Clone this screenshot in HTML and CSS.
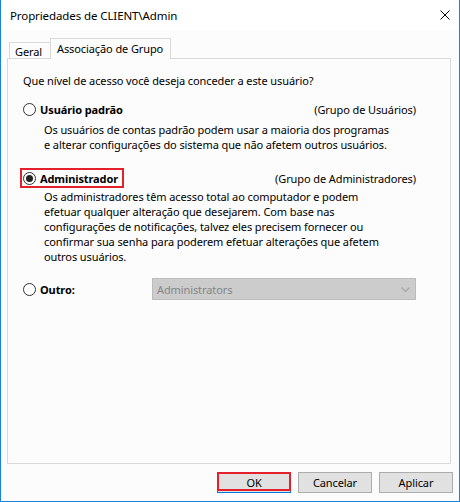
FILE: index.html
```html
<!DOCTYPE html>
<html lang="pt">
<head>
<meta charset="utf-8">
<title>Propriedades de CLIENT\Admin</title>
<link rel="stylesheet" href="styles.css">
</head>
<body>
<div class="window">
  <div class="titlebar">
    <span class="title">Propriedades de CLIENT\Admin</span>
    <svg class="close" width="10" height="10" viewBox="0 0 10 10"><path d="M0.5 0.5 L9.5 9.5 M9.5 0.5 L0.5 9.5" stroke="#000" stroke-width="1" fill="none"/></svg>
  </div>
  <div class="body">
    <div class="tabs">
      <div class="tab">Geral</div>
      <div class="tab active">Associação de Grupo</div>
    </div>
    <div class="panel">
      <p class="question">Que nível de acesso você deseja conceder a este usuário?</p>

      <div class="option first">
        <div class="opt-head">
          <span class="radio-label"><span class="radio"></span><b>Usuário padrão</b></span>
          <span class="group">(Grupo de Usuários)</span>
        </div>
        <p class="desc d1">Os usuários de contas padrão podem usar a maioria dos programas<br>e alterar configurações do sistema que não afetem outros usuários.</p>
      </div>

      <div class="option second">
        <div class="opt-head">
          <span class="radio-label marked"><span class="radio checked"><span class="dot"></span></span><b>Administrador</b></span>
          <span class="group">(Grupo de Administradores)</span>
        </div>
        <p class="desc d2">Os administradores têm acesso total ao computador e podem<br>efetuar qualquer alteração que desejarem. Com base nas<br>configurações de notificações, talvez eles precisem fornecer ou<br>confirmar sua senha para poderem efetuar alterações que afetem<br>outros usuários.</p>
      </div>

      <div class="option third">
        <div class="opt-head combo-row">
          <span class="radio-label"><span class="radio"></span><b>Outro:</b></span>
          <div class="combo">
            <span class="combo-text">Administrators</span>
            <svg class="chev" width="9" height="5" viewBox="0 0 9 5"><path d="M0.5 0.5 L4.5 4.5 L8.5 0.5" stroke="#a6a6a6" stroke-width="1.2" fill="none"/></svg>
          </div>
        </div>
      </div>
    </div>
    <div class="buttons">
      <button class="btn default">OK</button>
      <button class="btn">Cancelar</button>
      <button class="btn">Aplicar</button>
    </div>
  </div>
</div>
</body>
</html>
```
FILE: styles.css
```css
* { box-sizing: border-box; }
html, body { margin: 0; padding: 0; background: #fcfcfc; }
body {
  font-family: "Noto Sans", "Liberation Sans", sans-serif;
  font-size: 11px;
  letter-spacing: -0.1px;
  color: #000;
}
.window {
  width: 460px;
  height: 502px;
  border: 1px solid #1883d7;
  border-top: none;
  background: #fcfcfc;
  display: flex;
  flex-direction: column;
}
.titlebar {
  height: 30px;
  flex: none;
  background: #ffffff;
  display: flex;
  align-items: center;
  justify-content: space-between;
  padding: 0 9px 0 9px;
}
.title { line-height: 15px; font-size: 11.5px; }
.close { display: block; }
.body {
  flex: 1;
  display: flex;
  flex-direction: column;
  padding: 8px 6px 0 6px;
}
.tabs {
  display: flex;
  align-items: flex-end;
  height: 20px;
  margin-left: 2px;
  position: relative;
  z-index: 1;
}
.tab {
  line-height: 15px;
  white-space: nowrap;
}
.tab:not(.active) {
  width: 41px;
  height: 16px;
  border-left: 1px solid #d9d9d9;
  border-top: 1px solid #d9d9d9;
  padding-left: 5px;
  padding-top: 1px;
}
.tab.active {
  height: 21px;
  margin-bottom: -1px;
  border: 1px solid #d9d9d9;
  border-bottom: none;
  background: #fcfcfc;
  padding: 2px 7px 0 6px;
}
.panel {
  height: 406px;
  flex: none;
  margin-right: 2px;
  border: 1px solid #d9d9d9;
  padding: 14px 34px 0 15px;
}
.question { margin: 0; line-height: 15px; white-space: nowrap; }
.option.first { margin-top: 13px; }
.option.second { margin-top: 18px; }
.option.third { margin-top: 14px; }
.opt-head {
  display: flex;
  align-items: center;
  justify-content: space-between;
  height: 17px;
}
.opt-head.combo-row { height: 22px; }
.radio-label {
  display: flex;
  align-items: center;
  gap: 4px;
  height: 17px;
  position: relative;
}
.radio-label b { font-weight: 700; line-height: 17px; }
.radio {
  width: 13px;
  height: 13px;
  border: 1px solid #333;
  border-radius: 50%;
  background: #fff;
  display: flex;
  align-items: center;
  justify-content: center;
  flex: none;
}
.radio .dot {
  width: 7px;
  height: 7px;
  border-radius: 50%;
  background: #222;
}
.marked::after {
  content: "";
  position: absolute;
  left: -3px;
  right: -6px;
  top: -2px;
  bottom: -1px;
  border: 2px solid #e3202b;
}
.group { line-height: 17px; white-space: nowrap; }
.desc {
  margin: 0;
  padding-left: 21px;
  line-height: 15px;
  white-space: nowrap;
}
.desc.d1 { margin-top: 4px; }
.desc.d2 { margin-top: 2px; }
.combo {
  width: 264px;
  height: 22px;
  background: #cccccc;
  border: 1px solid #bcbcbc;
  display: flex;
  align-items: center;
  justify-content: space-between;
  padding: 0 5px 0 4px;
  color: #868686;
}
.chev { display: block; }
.buttons {
  display: flex;
  justify-content: flex-end;
  gap: 7px;
  margin-top: 8px;
}
.btn {
  width: 74px;
  height: 21px;
  background: #e1e1e1;
  border: 1px solid #adadad;
  font-family: inherit;
  font-size: 11px;
  letter-spacing: -0.1px;
  color: #000;
  padding: 0;
  position: relative;
}
.btn.default { border-color: #0078d7; }
.btn.default::after {
  content: "";
  position: absolute;
  left: -1px;
  right: -1px;
  top: -1px;
  bottom: 1px;
  border: 2px solid #e3202b;
}
```
